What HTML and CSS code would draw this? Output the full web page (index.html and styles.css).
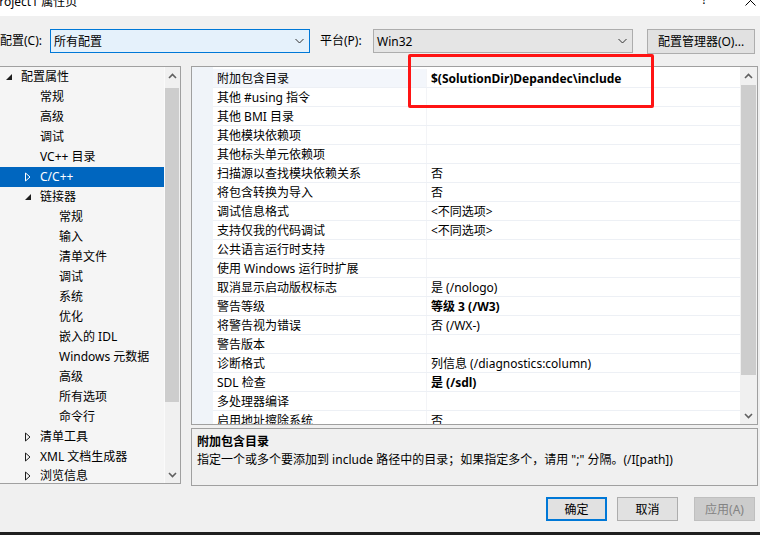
FILE: index.html
```html
<!DOCTYPE html>
<html lang="zh-CN">
<head>
<meta charset="utf-8">
<title>Project1 属性页</title>
<link rel="stylesheet" href="styles.css">
</head>
<body>
<div class="window">
  <div class="titlebar">
    <span class="title">Project1 属性页</span>
    <span class="tb-help">?</span>
    <svg class="tb-close" width="11" height="11" viewBox="0 0 11 11"><path d="M0.5 0.5 L10.5 10.5 M10.5 0.5 L0.5 10.5" stroke="#000" stroke-width="1" fill="none"/></svg>
  </div>

  <div class="toolbar">
    <span class="lbl">配置(C):</span>
    <div class="combo combo-active">
      <span>所有配置</span>
      <svg class="chev" width="9" height="6" viewBox="0 0 9 6"><path d="M0.5 1 L4.5 5 L8.5 1" stroke="#333" stroke-width="1" fill="none"/></svg>
    </div>
    <span class="lbl lbl-plat">平台(P):</span>
    <div class="combo">
      <span>Win32</span>
      <svg class="chev" width="9" height="6" viewBox="0 0 9 6"><path d="M0.5 1 L4.5 5 L8.5 1" stroke="#333" stroke-width="1" fill="none"/></svg>
    </div>
    <button class="btn btn-mgr">配置管理器(O)...</button>
  </div>

  <div class="main">
    <div class="tree">
      <div class="tree-list">
        <div class="trow l0"><svg class="tg" width="8" height="8" viewBox="0 0 8 8"><polygon points="7,1 7,7 1,7" fill="#1e1e1e"/></svg><span>配置属性</span></div>
        <div class="trow l1"><span class="tg-sp"></span><span>常规</span></div>
        <div class="trow l1"><span class="tg-sp"></span><span>高级</span></div>
        <div class="trow l1"><span class="tg-sp"></span><span>调试</span></div>
        <div class="trow l1"><span class="tg-sp"></span><span>VC++ 目录</span></div>
        <div class="trow l1 sel"><svg class="tg" width="8" height="10" viewBox="0 0 8 10"><path d="M1.5 1 L6 5 L1.5 9 Z" stroke="#fff" stroke-width="1" fill="none"/></svg><span>C/C++</span></div>
        <div class="trow l1"><svg class="tg" width="8" height="8" viewBox="0 0 8 8"><polygon points="7,1 7,7 1,7" fill="#1e1e1e"/></svg><span>链接器</span></div>
        <div class="trow l2"><span class="tg-sp"></span><span>常规</span></div>
        <div class="trow l2"><span class="tg-sp"></span><span>输入</span></div>
        <div class="trow l2"><span class="tg-sp"></span><span>清单文件</span></div>
        <div class="trow l2"><span class="tg-sp"></span><span>调试</span></div>
        <div class="trow l2"><span class="tg-sp"></span><span>系统</span></div>
        <div class="trow l2"><span class="tg-sp"></span><span>优化</span></div>
        <div class="trow l2"><span class="tg-sp"></span><span>嵌入的 IDL</span></div>
        <div class="trow l2"><span class="tg-sp"></span><span>Windows 元数据</span></div>
        <div class="trow l2"><span class="tg-sp"></span><span>高级</span></div>
        <div class="trow l2"><span class="tg-sp"></span><span>所有选项</span></div>
        <div class="trow l2"><span class="tg-sp"></span><span>命令行</span></div>
        <div class="trow l1"><svg class="tg" width="8" height="10" viewBox="0 0 8 10"><path d="M1.5 1 L6 5 L1.5 9 Z" stroke="#1e1e1e" stroke-width="1" fill="none"/></svg><span>清单工具</span></div>
        <div class="trow l1"><svg class="tg" width="8" height="10" viewBox="0 0 8 10"><path d="M1.5 1 L6 5 L1.5 9 Z" stroke="#1e1e1e" stroke-width="1" fill="none"/></svg><span>XML 文档生成器</span></div>
        <div class="trow l1 last"><svg class="tg" width="8" height="10" viewBox="0 0 8 10"><path d="M1.5 1 L6 5 L1.5 9 Z" stroke="#1e1e1e" stroke-width="1" fill="none"/></svg><span>浏览信息</span></div>
      </div>
      <div class="vscroll tree-scroll">
        <div class="sb-arrow"><svg width="9" height="6" viewBox="0 0 9 6"><path d="M1 5 L4.5 1.5 L8 5" stroke="#606060" stroke-width="1.6" fill="none"/></svg></div>
        <div class="sb-thumb tree-thumb"></div>
        <div class="sb-arrow sb-down"><svg width="9" height="6" viewBox="0 0 9 6"><path d="M1 1 L4.5 4.5 L8 1" stroke="#606060" stroke-width="1.6" fill="none"/></svg></div>
      </div>
    </div>

    <div class="right">
      <div class="grid">
        <div class="gutter"></div>
        <div class="grid-body">
          <div class="grow first"><div class="gname">附加包含目录</div><div class="gval b">$(SolutionDir)Depandec\include</div></div>
          <div class="grow"><div class="gname">其他 #using 指令</div><div class="gval"></div></div>
          <div class="grow"><div class="gname">其他 BMI 目录</div><div class="gval"></div></div>
          <div class="grow"><div class="gname">其他模块依赖项</div><div class="gval"></div></div>
          <div class="grow"><div class="gname">其他标头单元依赖项</div><div class="gval"></div></div>
          <div class="grow"><div class="gname">扫描源以查找模块依赖关系</div><div class="gval">否</div></div>
          <div class="grow"><div class="gname">将包含转换为导入</div><div class="gval">否</div></div>
          <div class="grow"><div class="gname">调试信息格式</div><div class="gval">&lt;不同选项&gt;</div></div>
          <div class="grow"><div class="gname">支持仅我的代码调试</div><div class="gval">&lt;不同选项&gt;</div></div>
          <div class="grow"><div class="gname">公共语言运行时支持</div><div class="gval"></div></div>
          <div class="grow"><div class="gname">使用 Windows 运行时扩展</div><div class="gval"></div></div>
          <div class="grow"><div class="gname">取消显示启动版权标志</div><div class="gval">是 (/nologo)</div></div>
          <div class="grow"><div class="gname">警告等级</div><div class="gval b">等级 3 (/W3)</div></div>
          <div class="grow"><div class="gname">将警告视为错误</div><div class="gval">否 (/WX-)</div></div>
          <div class="grow"><div class="gname">警告版本</div><div class="gval"></div></div>
          <div class="grow"><div class="gname">诊断格式</div><div class="gval">列信息 (/diagnostics:column)</div></div>
          <div class="grow"><div class="gname">SDL 检查</div><div class="gval b">是 (/sdl)</div></div>
          <div class="grow"><div class="gname">多处理器编译</div><div class="gval"></div></div>
          <div class="grow"><div class="gname">启用地址擦除系统</div><div class="gval">否</div></div>
        </div>
        <div class="vscroll grid-scroll">
          <div class="sb-arrow"><svg width="9" height="6" viewBox="0 0 9 6"><path d="M1 5 L4.5 1.5 L8 5" stroke="#606060" stroke-width="1.6" fill="none"/></svg></div>
          <div class="sb-thumb grid-thumb"></div>
          <div class="sb-arrow sb-down"><svg width="9" height="6" viewBox="0 0 9 6"><path d="M1 1 L4.5 4.5 L8 1" stroke="#606060" stroke-width="1.6" fill="none"/></svg></div>
        </div>
      </div>
      <div class="desc">
        <div class="desc-title">附加包含目录</div>
        <div class="desc-text">指定一个或多个要添加到 include 路径中的目录；如果指定多个，请用 ";" 分隔。(/I[path])</div>
      </div>
    </div>
  </div>

  <div class="footer">
    <button class="btn btn-ok">确定</button>
    <button class="btn btn-cancel">取消</button>
    <button class="btn btn-apply" disabled>应用(A)</button>
  </div>
  <div class="taskbar"></div>

  <div class="annot"></div>
</div>
</body>
</html>
```

FILE: styles.css
```css
* { box-sizing: border-box; }
html, body { margin: 0; padding: 0; }
body {
  width: 760px;
  height: 535px;
  overflow: hidden;
  background: #f0f0f0;
  font-family: "Noto Sans", "Noto Sans CJK SC", sans-serif;
  font-size: 12px;
  color: #000;
}
.window {
  position: relative;
  width: 760px;
  height: 535px;
  display: flex;
  flex-direction: column;
  overflow: hidden;
}

/* title bar */
.titlebar {
  flex: none;
  height: 16px;
  background: #fff;
  display: flex;
  align-items: flex-start;
  overflow: hidden;
}
.title { margin-left: -8px; margin-top: -5px; line-height: 14px; white-space: nowrap; }
.tb-help { margin-left: auto; margin-top: -7px; line-height: 14px; font-size: 12px; }
.tb-close { margin-left: 38px; margin-right: 4px; margin-top: -5px; flex: none; }

/* toolbar */
.toolbar {
  flex: none;
  display: flex;
  align-items: center;
  height: 24px;
  margin-top: 13px;
}
.lbl { width: 50px; line-height: 24px; white-space: nowrap; }
.lbl-plat { margin-left: 10px; width: 53px; }
.combo {
  width: 260px;
  height: 24px;
  border: 1px solid #adadad;
  background: #e5e5e5;
  display: flex;
  align-items: center;
  justify-content: space-between;
  padding: 0 5px 0 3px;
}
.combo-active { border-color: #0078d7; background: #e5f1fb; }
.chev { flex: none; }
.btn {
  font: inherit;
  font-size: 12px;
  color: #000;
  background: #e1e1e1;
  border: 1px solid #adadad;
  padding: 0;
  margin: 0;
  height: 24px;
  width: 61px;
  border-radius: 0;
}
.btn-mgr { margin-left: 14px; width: 108px; height: 25px; }

/* main */
.main {
  flex: none;
  display: flex;
  margin-top: 13px;
  height: 420px;
}
.tree {
  flex: none;
  width: 182px;
  height: 418px;
  margin-left: -1px;
  border: 1px solid #a0a0a0;
  background: #f5f5f5;
  display: flex;
  overflow: hidden;
}
.tree-list { flex: 1; overflow: hidden; }
.trow {
  height: 20px;
  display: flex;
  align-items: center;
  white-space: nowrap;
  line-height: 18px;
}
.trow.last { height: 16px; align-items: flex-start; }
.trow.last .tg { margin-top: 4px; }
.trow.l0 { padding-left: 5px; }
.trow.l1 { padding-left: 24px; }
.trow.l2 { padding-left: 43px; }
.tg, .tg-sp { flex: none; width: 8px; margin-right: 8px; }
.tg-sp { height: 8px; }
.trow.sel { background: #0066bf; color: #fff; }

.vscroll {
  flex: none;
  width: 17px;
  background: #f0f0f0;
  display: flex;
  flex-direction: column;
}
.tree-scroll { width: 16px; border-left: 1px solid #fafafa; }
.sb-arrow {
  flex: none;
  height: 17px;
  display: flex;
  align-items: center;
  justify-content: center;
}
.sb-down { margin-top: auto; }
.sb-thumb { flex: none; background: #cdcdcd; margin-left: 1px; margin-right: 1px; }
.tree-thumb { margin-top: 4px; height: 314px; margin-left: 0; }
.grid-thumb { margin-top: 1px; height: 290px; }

/* right column */
.right {
  flex: none;
  width: 567px;
  margin-left: 10px;
  display: flex;
  flex-direction: column;
}
.grid {
  flex: none;
  height: 359px;
  border: 1px solid #a0a0a0;
  background: #fff;
  display: flex;
  overflow: hidden;
}
.gutter { flex: none; width: 21px; background: #f0f4f9; }
.grid-body { flex: 1; padding-top: 2px; overflow: hidden; }
.grow {
  display: flex;
  height: 19px;
  border-bottom: 1px solid #edf0f5;
  line-height: 19px;
  white-space: nowrap;
}
.gname {
  flex: none;
  width: 214px;
  padding-left: 4px;
  border-right: 1px solid #f3f4f7;
}
.grow.first .gname { background: #f3f6fb; }
.gval { flex: 1; padding-left: 4px; overflow: hidden; }
.b { font-weight: bold; }

.desc {
  flex: none;
  margin-top: 3px;
  height: 58px;
  border: 1px solid #a0a0a0;
  padding: 4px 5px 0;
  line-height: 18px;
  white-space: nowrap;
}
.desc-title { font-weight: bold; }

/* footer */
.footer {
  flex: none;
  display: flex;
  justify-content: flex-end;
  margin-top: 11px;
  padding-right: 5px;
}
.btn-ok { border: 2px solid #0078d7; margin-right: 10px; }
.btn-cancel { margin-right: 16px; }
.btn-apply { background: #cccccc; border-color: #bfbfbf; color: #838383; }

.taskbar { flex: none; margin-top: auto; height: 3px; background: #1f1f1f; }

/* red annotation rectangle drawn over the screenshot */
.annot {
  position: absolute;
  left: 408px;
  top: 54px;
  width: 246px;
  height: 54px;
  border: 3px solid #ff1414;
  border-radius: 2px;
  pointer-events: none;
}
```
